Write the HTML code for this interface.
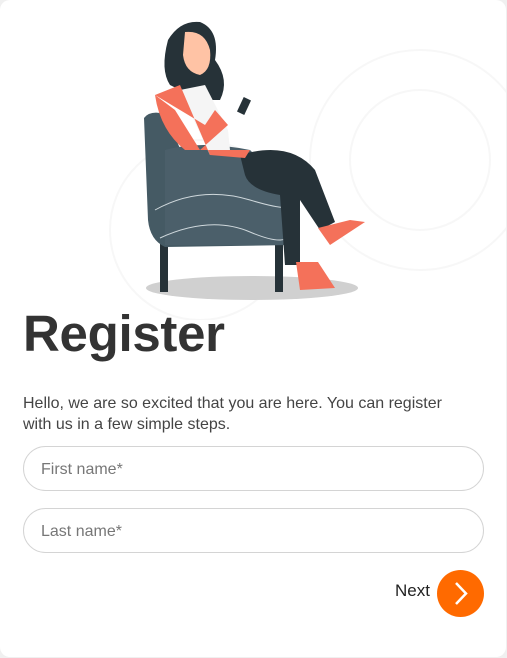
<!DOCTYPE html>
<html><head><style>
html,body{margin:0;padding:0;background:#f0f0f0;}
.card{position:absolute;left:0;top:0;width:506px;height:657px;background:#fff;border-radius:10px;overflow:hidden;font-family:"Liberation Sans",sans-serif;}
h1{position:absolute;left:23px;top:304px;margin:0;font-size:51px;font-weight:bold;color:#333;letter-spacing:-0.3px;}
p{position:absolute;left:23px;top:393px;margin:0;width:440px;font-size:16px;line-height:21px;color:#444;}
.in{position:absolute;left:23px;width:459px;height:43px;border:1px solid #d4d4d4;border-radius:23px;box-sizing:content-box;}
.in span{position:absolute;left:17px;top:14px;font-size:16px;color:#777;}
.next{position:absolute;left:395px;top:581px;font-size:17px;color:#222;}
.btn{position:absolute;left:437px;top:570px;width:47px;height:47px;border-radius:50%;background:#ff6a00;}
</style></head><body>
<div class="card">
<svg width="507" height="320" style="position:absolute;left:0;top:0">
<g fill="none" stroke="#f7f7f7" stroke-width="2">
<circle cx="420" cy="160" r="110"/><circle cx="420" cy="160" r="70"/><circle cx="200" cy="230" r="90"/>
</g>
<ellipse cx="252" cy="288" rx="106" ry="12" fill="#d0d0d0"/>
<rect x="160" y="240" width="8" height="52" fill="#263238"/>
<rect x="275" y="240" width="8" height="52" fill="#263238"/>
<path d="M144 118 Q150 110 165 114 L185 160 Q250 150 270 170 L295 195 L292 245 L165 247 Q150 240 148 220 Z" fill="#455a64"/>
<path d="M165 150 Q200 140 250 150 L290 190 L290 245 L165 245 Z" fill="#4b5f6a"/>
<path d="M155 210 Q200 185 250 200 T290 200 M160 238 Q210 215 250 232 T292 230" stroke="#cfd8dc" stroke-width="1" fill="none"/>
<path d="M240 155 Q290 140 315 170 L335 222 L320 230 L300 200 L300 265 L285 265 L280 195 Q250 190 245 175 Z" fill="#263238"/>
<path d="M318 228 L350 220 L365 222 L330 245 Z" fill="#f4715a"/>
<path d="M296 262 L318 262 L335 288 L300 290 Z" fill="#f4715a"/>
<path d="M168 40 Q180 20 200 22 Q220 30 215 60 Q230 80 220 100 L200 100 L170 85 Q160 70 168 40Z" fill="#263238"/>
<path d="M185 32 Q205 30 210 50 Q212 70 200 75 Q185 72 183 55 Z" fill="#ffc3a5"/>
<path d="M180 90 L205 85 L228 130 L230 150 L210 155 Z" fill="#f5f5f5"/>
<path d="M155 95 L180 85 L210 155 L245 158 L250 150 L200 150 L175 110 Z M155 95 Q160 130 185 150 L200 150 L228 125 L215 110 L205 125 Z" fill="#f4715a"/>
<rect x="240" y="98" width="8" height="16" fill="#263238" transform="rotate(25 244 106)"/>
</svg>
<h1>Register</h1>
<p>Hello, we are so excited that you are here. You can register with us in a few simple steps.</p>
<div class="in" style="top:446px"><span>First name*</span></div>
<div class="in" style="top:508px"><span>Last name*</span></div>
<div class="next">Next</div>
<div class="btn"><svg width="47" height="47"><path d="M19 13 L29 23.5 L19 34" stroke="#fff" stroke-width="2.5" fill="none"/></svg></div>
</div>
</body></html>
